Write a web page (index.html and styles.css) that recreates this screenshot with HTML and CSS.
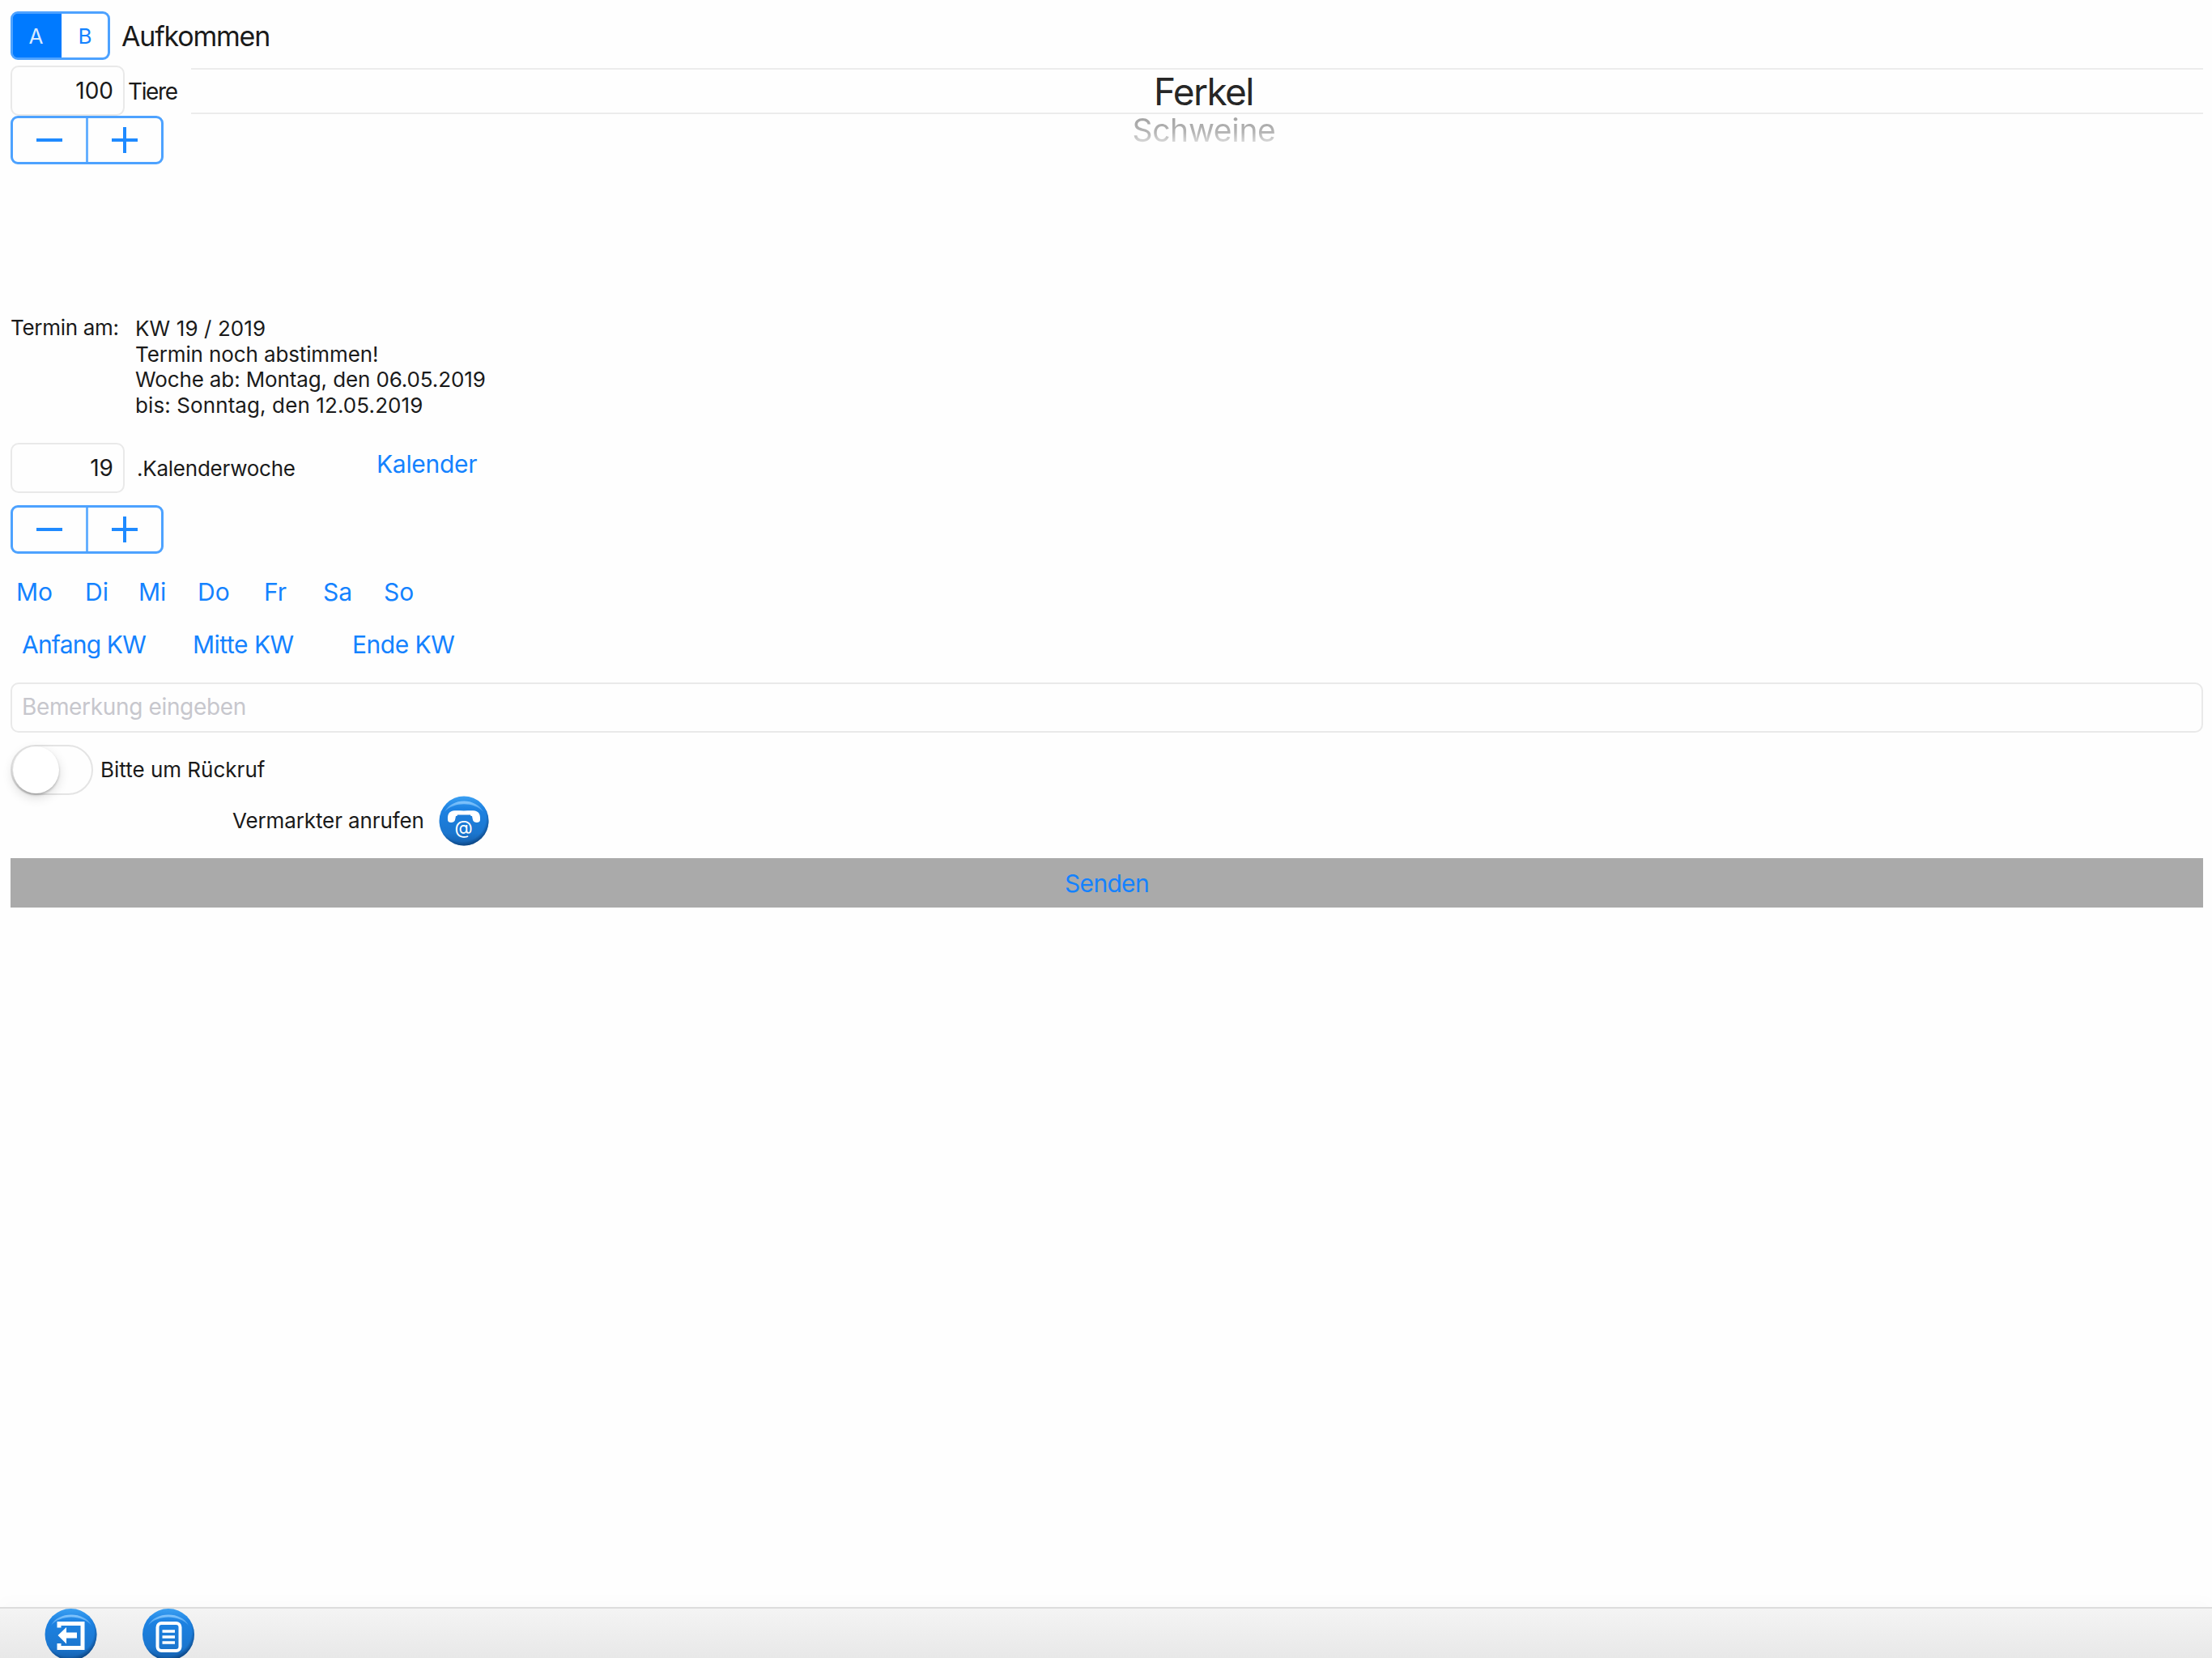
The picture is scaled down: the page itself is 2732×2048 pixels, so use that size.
FILE: index.html
```html
<!DOCTYPE html>
<html lang="de">
    <head>
        <meta charset="utf-8">
        <title>Aufkommen</title>
        <link rel="stylesheet" href="styles.css">
    </head>
    <body>

        <div class="page">
            <!-- Header -->
            <div class="head">
                <div class="segmented">
                    <button class="segment active">A</button>
                    <button class="segment">B</button>
                </div>
                <span class="title">Aufkommen</span>
            </div>

            <!-- Amount and kind of animal -->
            <div class="amount">
                <div class="amount-left">
                    <div class="amount-row">
                        <div class="field number">100</div>
                        <span class="unit">Tiere</span>
                    </div>
                    <div class="stepper">
                        <button class="step"><svg width="34" height="34" viewBox="0 0 34 34"><path d="M1 17h32"/></svg></button>
                        <button class="step"><svg width="34" height="34" viewBox="0 0 34 34"><path d="M1 17h32M17 1v32"/></svg></button>
                    </div>
                </div>
                <div class="picker">
                    <div class="picked">Ferkel</div>
                    <div class="next">Schweine</div>
                </div>
            </div>

            <!-- Date -->
            <div class="date">
                <span class="date-label">Termin am:</span>
                <div class="date-text">
                    <div class="short">KW 19 / 2019</div>
                    <div>Termin noch abstimmen!</div>
                    <div>Woche ab: Montag, den 06.05.2019</div>
                    <div class="short">bis: Sonntag, den 12.05.2019</div>
                </div>
            </div>

            <div class="week">
                <div class="field number">19</div>
                <span class="week-label">.Kalenderwoche</span>
                <button class="link calendar">Kalender</button>
            </div>
            <div class="stepper">
                <button class="step"><svg width="34" height="34" viewBox="0 0 34 34"><path d="M1 17h32"/></svg></button>
                <button class="step"><svg width="34" height="34" viewBox="0 0 34 34"><path d="M1 17h32M17 1v32"/></svg></button>
            </div>

            <div class="days">
                <button class="link">Mo</button>
                <button class="link">Di</button>
                <button class="link">Mi</button>
                <button class="link">Do</button>
                <button class="link">Fr</button>
                <button class="link">Sa</button>
                <button class="link">So</button>
            </div>
            <div class="parts">
                <button class="link start">Anfang KW</button>
                <button class="link">Mitte KW</button>
                <button class="link">Ende KW</button>
            </div>

            <!-- Remark and callback -->
            <div class="field remark">Bemerkung eingeben</div>
            <div class="callback">
                <div class="switch"><div class="knob"></div></div>
                <span class="callback-label">Bitte um Rückruf</span>
            </div>
            <div class="call">
                <span>Vermarkter anrufen</span>
                <svg width="64" height="64" viewBox="0 0 64 64">
                    <defs>
                        <linearGradient id="ball" x1="0" y1="0" x2="0" y2="1">
                            <stop offset="0" stop-color="#3ba0f2"/>
                            <stop offset="0.25" stop-color="#1d82e2"/>
                            <stop offset="0.75" stop-color="#1b76cf"/>
                            <stop offset="1" stop-color="#135ca8"/>
                        </linearGradient>
                        <radialGradient id="rim" cx="0.46" cy="0.43" r="0.58">
                            <stop offset="0.84" stop-color="#0a3a70" stop-opacity="0"/>
                            <stop offset="1" stop-color="#0a3a70" stop-opacity="0.7"/>
                        </radialGradient>
                        <linearGradient id="shine" x1="0" y1="0" x2="0" y2="1">
                            <stop offset="0" stop-color="#8ccbff" stop-opacity="0.9"/>
                            <stop offset="1" stop-color="#8ccbff" stop-opacity="0.3"/>
                        </linearGradient>
                    </defs>
                    <circle cx="32" cy="32" r="30.5" fill="url(#ball)"/>
                    <circle cx="32" cy="32" r="30.5" fill="url(#rim)"/>
                    <path d="M8 21C17 3 47 3 56 21C45 8 19 8 8 21z" fill="url(#shine)"/>
                    <path d="M12 31C11 17 20 19.500 32 19.500S53 17 52 31C52 35 44 35 43 31L42 26H22L21 31C20 35 12 35 12 31z" fill="#fff"/>
                    <path d="M24 24.500h16l4 10H20z" fill="#1c7cd9"/>
                    <text class="at" x="31.500" y="47.500" text-anchor="middle">@</text>
                </svg>
            </div>

            <button class="send">Senden</button>
        </div>

        <!-- Toolbar -->
        <div class="toolbar">
            <svg width="66" height="66" viewBox="0 0 66 66">
                <circle cx="32.500" cy="32" r="32" fill="url(#ball)"/>
                <circle cx="32.500" cy="32" r="32" fill="url(#rim)"/>
                <path d="M8 21C16 3 50 3 58 21C47 7 19 7 8 21z" fill="url(#shine)"/>
                <path d="M18 23.500V18.500H47V48.500H18V43" fill="none" stroke="#fff" stroke-width="5"/>
                <path d="M16.500 33L27 23V29.500H40V36.500H27V43.500z" fill="#fff"/>
            </svg>
            <svg width="66" height="66" viewBox="0 0 66 66">
                <circle cx="33" cy="32" r="32" fill="url(#ball)"/>
                <circle cx="33" cy="32" r="32" fill="url(#rim)"/>
                <path d="M8 21C16 3 50 3 58 21C47 7 19 7 8 21z" fill="url(#shine)"/>
                <rect x="19.500" y="18" width="28" height="34" rx="5" fill="none" stroke="#fff" stroke-width="4"/>
                <path d="M25.500 28H41M25.500 35H41M25.500 42H41" stroke="#fff" stroke-width="3.500"/>
            </svg>
        </div>

    </body>
</html>
```
FILE: styles.css
```css
* {
    margin: 0;
    padding: 0;
    box-sizing: border-box;
}

body {
    height: 2048px;
    display: flex;
    flex-direction: column;
    font-family: Inter, "Liberation Sans", sans-serif;
    font-size: 26px;
    color: #1a1a1a;
    background-color: #fefefe;
    overflow: hidden;
}

button {
    border: none;
    background: none;
    font-family: inherit;
    color: #1482ff;
}

.page {
    flex: 1;
    display: flex;
    flex-direction: column;
    padding: 14px 11px 0 13px;
}

/* Header */
.head {
    display: flex;
    align-items: center;
    height: 60px;
    margin-bottom: 7px;
}

.segmented {
    display: flex;
    width: 123px;
    height: 60px;
    border: 3px solid #4da2ff;
    border-radius: 9px;
    background: linear-gradient(to right, #007aff 50%, #fff 50%);
    overflow: hidden;
}

.segment {
    flex: 1;
    padding-left: 1px;
    font-size: 26px;
}

.segment.active {
    flex: 0 0 60px;
    padding: 0 3px 0 0;
    background-color: #007aff;
    color: #d9ebff;
}

.title {
    margin-left: 14px;
    font-size: 34px;
    letter-spacing: -1.2px;
}

/* Fields */
.field {
    display: flex;
    align-items: center;
    height: 62px;
    border: 2px solid #e9e9e9;
    border-radius: 10px;
    font-size: 28px;
}

.number {
    width: 141px;
    justify-content: flex-end;
    padding-right: 12px;
}

/* Amount */
.amount {
    display: flex;
    height: 309px;
}

.amount-left {
    width: 223px;
}

.amount-row {
    display: flex;
    align-items: center;
}

.unit {
    margin-left: 4px;
    padding-top: 2px;
    font-size: 28px;
    letter-spacing: -1.4px;
}

.stepper {
    display: flex;
    width: 189px;
    height: 60px;
    border: 3px solid #4da2ff;
    border-radius: 9px;
}

.step {
    flex: 1;
    display: flex;
    align-items: center;
    justify-content: center;
}

.step + .step {
    border-left: 3px solid #66b0ff;
}

.step svg {
    fill: none;
    stroke: #1f8aff;
    stroke-width: 4;
}

.picker {
    flex: 1;
    padding-top: 3px;
    text-align: center;
}

.picked {
    height: 57px;
    padding-left: 16px;
    border-top: 2px solid #ececec;
    border-bottom: 2px solid #ececec;
    font-size: 46px;
    line-height: 55px;
    letter-spacing: -1.6px;
    color: #262626;
}

.next {
    height: 52px;
    padding-left: 17px;
    font-size: 39px;
    line-height: 40px;
    letter-spacing: -0.3px;
    color: transparent;
    background: linear-gradient(#a6a6a6 6px, #b4b4b4 22px, #dcdcdc 36px);
    background-clip: text;
    -webkit-background-clip: text;
}

/* Date */
.date {
    display: flex;
    height: 157px;
}

.date-label {
    width: 154px;
    line-height: 29px;
    letter-spacing: -0.3px;
}

.date-text {
    line-height: 31.6px;
    letter-spacing: -0.12px;
}

.date-text .short {
    letter-spacing: 0.1px;
}

.week {
    display: flex;
    align-items: center;
    height: 61px;
    margin-bottom: 16px;
}

.week-label {
    width: 311px;
    padding: 1px 0 0 15px;
    letter-spacing: -0.25px;
}

.link {
    font-size: 30px;
    text-align: left;
}

.calendar {
    padding-bottom: 9px;
    letter-spacing: -0.3px;
}

.days {
    display: grid;
    grid-template-columns: 85px 66px 73px 82px 73px 75px 60px;
    height: 50px;
    margin-top: 22px;
    padding-left: 7px;
}

.parts {
    display: grid;
    grid-template-columns: 211px 197px 140px;
    height: 50px;
    margin: 15px 0 22px;
    padding-left: 14px;
}

.parts .link {
    letter-spacing: -0.5px;
}

.parts .start {
    letter-spacing: -0.8px;
}

/* Remark and callback */
.remark {
    padding: 0 0 2px 12px;
    color: #c7c7cd;
    letter-spacing: -0.35px;
}

.callback {
    display: flex;
    align-items: center;
    height: 62px;
    margin: 15px 0 1px;
}

.switch {
    width: 102px;
    height: 62px;
    margin-right: 9px;
    padding-left: 1px;
    border: 2px solid #e4e4e4;
    border-radius: 31px;
}

.callback-label {
    padding-bottom: 1px;
}

.knob {
    width: 57px;
    height: 58px;
    border-radius: 50%;
    background-color: #fff;
    box-shadow: 0 5px 14px rgba(0, 0, 0, 0.14), 0 2px 3px rgba(0, 0, 0, 0.22);
}

.call {
    display: flex;
    align-items: center;
    gap: 17px;
    height: 61px;
    padding-left: 274px;
    margin-bottom: 16px;
    letter-spacing: -0.12px;
}

.at {
    font-family: Inter, "Liberation Sans", sans-serif;
    font-size: 23px;
    fill: #fff;
}

.send {
    height: 61px;
    background-color: #aaa;
    font-size: 30px;
    letter-spacing: -0.7px;
}

/* Toolbar */
.toolbar {
    display: flex;
    gap: 54px;
    height: 63px;
    padding-left: 55px;
    border-top: 2px solid #dcdcdc;
    background: linear-gradient(#f4f4f4, #e8e8e8);
    box-shadow: 0 -8px 20px rgba(0, 0, 0, 0.015);
}

.toolbar svg {
    flex: none;
}
```
